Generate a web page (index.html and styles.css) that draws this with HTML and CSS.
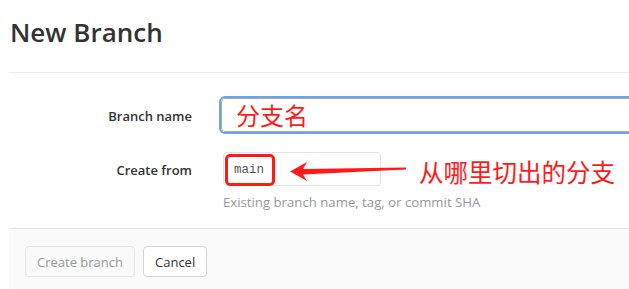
FILE: index.html
```html
<!DOCTYPE html>
<html lang="en">
<head>
<meta charset="utf-8">
<title>New Branch</title>
<link rel="stylesheet" href="styles.css">
</head>
<body>
<div class="page">
  <div class="header">
    <h1 class="title">New Branch</h1>
  </div>
  <form class="form">
    <div class="row">
      <label class="label" for="branch">Branch name</label>
      <div class="field">
        <div class="input focused" id="branch"><span class="cn input-text">分支名</span></div>
      </div>
    </div>
    <div class="row row-from">
      <label class="label">Create from</label>
      <div class="field field-from">
        <div class="ref-box"><span class="ref-mark">main</span></div>
        <div class="annotation">
          <svg class="arrow" width="122" height="26" viewBox="0 0 122 26">
            <path d="M2 12.5 L19 3 L15 10 L118 8.5 L118 10.5 L15 15.5 L19 22 Z" fill="#ff1a1a"/>
          </svg>
          <span class="cn note">从哪里切出的分支</span>
        </div>
        <div class="help">Existing branch name, tag, or commit SHA</div>
      </div>
    </div>
  </form>
  <div class="footer">
    <button class="btn btn-disabled" type="button">Create branch</button>
    <button class="btn" type="button">Cancel</button>
  </div>
</div>
</body>
</html>
```

FILE: styles.css
```css
html, body {
  margin: 0;
  padding: 0;
  background: #ffffff;
  overflow: hidden;
}
body {
  font-family: "Open Sans", "Noto Sans", "Noto Sans CJK SC", sans-serif;
  color: #333;
}
.page {
  margin-left: 9px;
  width: 720px;
}
.header {
  height: 73px;
  border-bottom: 1px solid #ececec;
  box-sizing: border-box;
  padding-top: 14px;
}
.title {
  margin: 0;
  font-size: 26px;
  font-weight: 600;
  line-height: 36px;
  color: #333;
  padding-left: 1px;
}
.form {
  padding-top: 25px;
}
.row {
  display: grid;
  grid-template-columns: 183px 1fr;
  column-gap: 29px;
  align-items: start;
}
.label {
  text-align: right;
  font-size: 13px;
  font-weight: 600;
  color: #333;
  line-height: 34px;
  padding-top: 1px;
}
.input {
  height: 34px;
  box-sizing: border-box;
  border: 1px solid #a9a9a9;
  border-radius: 4px;
  width: 440px;
  display: flex;
  align-items: center;
  padding-left: 14px;
}
.input.focused {
  box-shadow: 0 0 0 2px #6aa5e6;
}
.cn {
  font-family: "Noto Sans CJK SC", sans-serif;
  color: #ff1a1a;
}
.input-text {
  font-size: 24px;
  line-height: 1;
}
.row-from {
  margin-top: 19px;
}
.field-from {
  position: relative;
  margin-left: 2px;
}
.ref-box {
  width: 158px;
  height: 34px;
  box-sizing: border-box;
  border: 1px solid #e3e3e3;
  border-radius: 4px;
  padding: 1px 0 0 1px;
}
.ref-mark {
  display: flex;
  align-items: center;
  box-sizing: border-box;
  width: 50px;
  height: 32px;
  border: 3px solid #ff1a1a;
  border-radius: 5px;
  padding-left: 6px;
  font-family: "Liberation Mono", "DejaVu Sans Mono", monospace;
  font-size: 12.5px;
  color: #555;
}
.annotation {
  position: absolute;
  left: 65px;
  top: 7px;
  display: flex;
  align-items: center;
}
.note {
  font-size: 24.5px;
  line-height: 1;
  margin-left: 9px;
  white-space: nowrap;
}
.help {
  margin-top: 7px;
  font-size: 13.2px;
  color: #999;
  line-height: 18px;
}
.footer {
  margin-top: 17px;
  border-top: 1px solid #e5e5e5;
  background: #fafafb;
  padding: 17px 16px 20px;
  display: flex;
  gap: 8px;
}
.btn {
  height: 31px;
  padding: 0 11px;
  font-family: "Open Sans", "Noto Sans", sans-serif;
  font-size: 13px;
  color: #333;
  background: #fff;
  border: 1px solid #d5d5d5;
  border-radius: 4px;
}
.btn-disabled {
  color: #999;
  background: #fafafa;
  border-color: #e6e6e6;
}
```
